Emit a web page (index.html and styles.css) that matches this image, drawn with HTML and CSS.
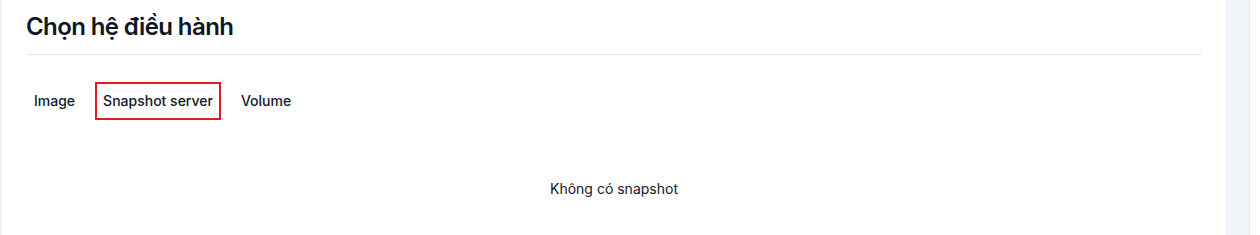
FILE: index.html
```html
<!DOCTYPE html>
<html lang="vi">
<head>
  <meta charset="UTF-8" />
  <title>Chọn hệ điều hành</title>
  <link rel="stylesheet" href="styles.css">
</head>
<body>
  <div class="layout">
    <div class="left-edge"></div>

    <!-- chọn hệ điều hành -->
    <div class="card">
      <h2 class="card-title">Chọn hệ điều hành</h2>

      <div class="tabs">
        <button class="tab" type="button">Image</button>
        <button class="tab active" type="button">Snapshot server</button>
        <button class="tab" type="button">Volume</button>
      </div>

      <div class="empty">Không có snapshot</div>
    </div>

    <div class="side-panel"></div>
  </div>
</body>
</html>
```

FILE: styles.css
```css
/* reset cơ bản */
body {
  margin: 0;
  background: #fff;
  font-family: Inter, "Noto Sans", sans-serif;
  color: #111827;
  overflow: hidden;
}
.layout {
  display: flex;
  height: 235px;
}
.left-edge {
  width: 2px;
  background: #eef1f6;
}

/* card chính */
.card {
  flex: 1;
  padding: 0 24px;
}
.card-title {
  margin: 0;
  padding-top: 12px;
  height: 42px;
  font-size: 24px;
  font-weight: 600;
  line-height: 30px;
  letter-spacing: -0.6px;
  color: #0f1524;
  border-bottom: 1px solid #e5e7eb;
}

/* tabs */
.tabs {
  display: flex;
  gap: 12px;
  margin-top: 27px;
}
.tab {
  font-family: inherit;
  font-size: 14px;
  font-weight: 500;
  color: #111827;
  background: none;
  border: none;
  border-bottom: 2px solid transparent;
  padding: 0 8px;
  height: 38px;
  line-height: 38px;
  cursor: pointer;
}
.tab.active {
  border-bottom-color: #6366c8;
  outline: 2px solid #e11d24;
  outline-offset: -2px;
}

/* trạng thái rỗng */
.empty {
  text-align: center;
  font-size: 14px;
  color: #111827;
  margin-top: 60px;
}

/* panel bên phải */
.side-panel {
  width: 23px;
  background: #f0f3f8;
  border-right: 1px solid #e2e6ee;
  margin-right: 10px;
}
```
